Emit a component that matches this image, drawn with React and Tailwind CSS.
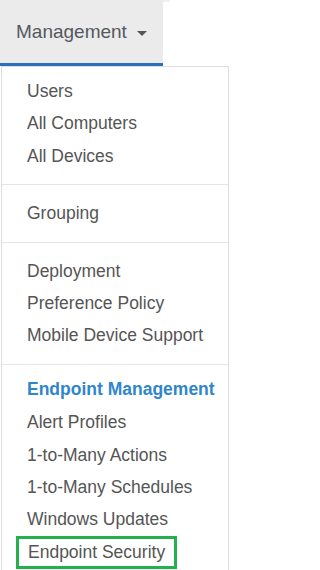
import React from "react";

const groups = [
  ["Users", "All Computers", "All Devices"],
  ["Grouping"],
  ["Deployment", "Preference Policy", "Mobile Device Support"],
];

const endpointItems = ["Alert Profiles", "1-to-Many Actions", "1-to-Many Schedules", "Windows Updates"];

function Item({ label }) {
  return (
    <div className="h-[32.4px] flex items-center pl-[25px] text-[17.5px] text-[#555555]">
      {label}
    </div>
  );
}

export default function App() {
  return (
    <div className="w-[229px] h-[570px] bg-white overflow-hidden" style={{ fontFamily: '"Liberation Sans", Arial, sans-serif' }}>
      {/* Nav tab */}
      <div className="flex">
        <div className="w-[163px] h-[66px] pt-[2px] bg-[#ebebeb] border-b-[3px] border-[#2a70b8] flex items-center pl-[16px] text-[19px] text-[#55595f]">
          <span>Management</span>
          <span className="ml-[10px] mt-[2px] w-0 h-0 border-l-[5px] border-r-[5px] border-t-[5px] border-l-transparent border-r-transparent border-t-[#555555]" />
        </div>
        <div className="w-[7px] border-t-2 border-[#f0f0f0] h-[2px]" />
      </div>

      {/* Dropdown menu */}
      <div className="ml-px border border-[#dddddd] border-b-0 pt-[8px] h-[504px]">
        {groups.map((g, i) => (
          <div key={i}>
            {g.map((label) => (
              <Item key={label} label={label} />
            ))}
            <div className={i === groups.length - 1 ? "h-px bg-[#e5e5e5] mt-[12px] mb-[8px]" : "h-px bg-[#e5e5e5] my-[12px]"} />
          </div>
        ))}
        <div className="h-[32.4px] flex items-center pl-[25px] text-[17.5px] font-bold text-[#2f86c9]">
          Endpoint Management
        </div>
        <div className="h-px" />
        {endpointItems.map((label) => (
          <Item key={label} label={label} />
        ))}
        <div className="ml-[14px] w-[161px] h-[33px] border-[3px] border-[#22b14c] flex items-center pl-[9px] text-[17.5px] text-[#555555]">
          Endpoint Security
        </div>
      </div>
    </div>
  );
}
